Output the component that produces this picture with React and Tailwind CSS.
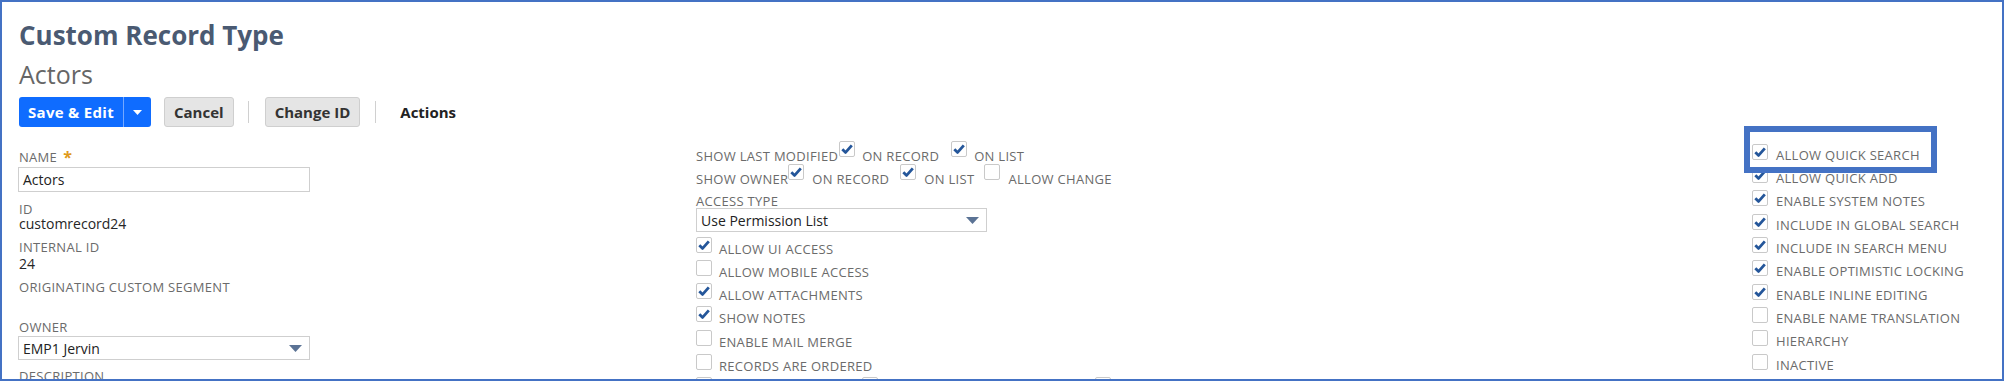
import React from 'react'

// checkbox as drawn by the record form
function Box({ on }) {
  return (
    <span className="w-4 h-4 shrink-0 border border-[#c9c9c9] bg-white rounded-[2px] flex items-center justify-center">
      {on && (
        <svg width="12" height="10" viewBox="0 0 12 10">
          <path d="M1.3 5.2 L4.6 8.4 L10.8 1.4" fill="none" stroke="#24569a" strokeWidth="2.8" strokeLinejoin="round" />
        </svg>
      )}
    </span>
  )
}

function Caret() {
  return (
    <svg width="13" height="7" viewBox="0 0 13 7">
      <path d="M0 0H13L6.5 7Z" fill="#5b7395" />
    </svg>
  )
}

function Select({ value }) {
  return (
    <div className="h-[24px] border border-[#cfcfcf] bg-white flex items-center justify-between pl-[4px] pr-[7px] text-[14px] text-[#222]">
      <span>{value}</span>
      <Caret />
    </div>
  )
}

const lbl = 'text-[13px] tracking-[0.3px] leading-[15px] uppercase text-[#6b6b6b]'

const Label = ({ children, className = '' }) => (
  <div className={lbl + ' ' + className}>{children}</div>
)

const Value = ({ children, className = '' }) => (
  <div className={'text-[14px] leading-[16px] text-[#262626] ' + className}>{children}</div>
)

const midChecks = [
  { label: 'ALLOW UI ACCESS', on: true, h: 'h-[23px]' },
  { label: 'ALLOW MOBILE ACCESS', on: false, h: 'h-[23px]' },
  { label: 'ALLOW ATTACHMENTS', on: true, h: 'h-[23px]' },
  { label: 'SHOW NOTES', on: true, h: 'h-[24px]' },
  { label: 'ENABLE MAIL MERGE', on: false, h: 'h-[24px]' },
  { label: 'RECORDS ARE ORDERED', on: false, h: 'h-[23px]' },
]

// rows are ~23.3px apart, so every third one gets a pixel more
const rightChecks = [
  ['ALLOW QUICK SEARCH', true, 'h-[23px]'],
  ['ALLOW QUICK ADD', true, 'h-[23px]'],
  ['ENABLE SYSTEM NOTES', true, 'h-[24px]'],
  ['INCLUDE IN GLOBAL SEARCH', true, 'h-[23px]'],
  ['INCLUDE IN SEARCH MENU', true, 'h-[23px]'],
  ['ENABLE OPTIMISTIC LOCKING', true, 'h-[24px]'],
  ['ENABLE INLINE EDITING', true, 'h-[23px]'],
  ['ENABLE NAME TRANSLATION', false, 'h-[23px]'],
  ['HIERARCHY', false, 'h-[24px]'],
  ['INACTIVE', false, 'h-[23px]'],
]

export default function App() {
  return (
    <div className="w-[2004px] h-[381px] border-2 border-[#4472c4] bg-white overflow-hidden relative font-['Open_Sans','Liberation_Sans',sans-serif]">
      <div className="pl-[17px] pt-[18px]">
        <div className="text-[26px] leading-[30px] font-bold text-[#4a5a72]">Custom Record Type</div>
        <div className="mt-[10px] text-[25px] leading-[28px] text-[#666]">Actors</div>
        <div className="mt-[9px] flex items-center h-[30px]">
          <div className="flex h-[30px] rounded-[3px] bg-[#0f6cff] text-white">
            <div className="w-[104px] pl-[9px] flex items-center text-[15px] tracking-[0.3px] font-bold">Save &amp; Edit</div>
            <div className="w-px bg-[#74a8ff]" />
            <div className="w-[27px] flex items-center justify-center">
              <svg width="9" height="5" viewBox="0 0 9 5"><path d="M0 0H9L4.5 5Z" fill="#fff" /></svg>
            </div>
          </div>
          <button className="ml-[13px] h-[30px] px-[9px] border border-[#cfcfcf] bg-[#e5e5e5] rounded-[3px] text-[15px] font-bold text-[#333]">Cancel</button>
          <div className="ml-[14px] w-px h-[22px] bg-[#d0d0d0]" />
          <button className="ml-[16px] h-[30px] px-[9px] border border-[#cfcfcf] bg-[#e5e5e5] rounded-[3px] text-[15px] font-bold text-[#333]">Change ID</button>
          <div className="ml-[15px] w-px h-[22px] bg-[#d0d0d0]" />
          <div className="ml-[24px] text-[15px] font-bold text-[#222]">Actions</div>
        </div>
      </div>

      <div className="flex">
        {/* left column */}
        <div className="w-[694px] shrink-0 pl-[16px] pt-[23px]">
          <div className="w-[292px]">
            <Label className="pl-px flex items-start">
              NAME <span className="ml-[6px] text-[#e09a1a] text-[16px] leading-[15px] font-bold">*</span>
            </Label>
            <div className="mt-[2px] h-[25px] border border-[#cfcfcf] flex items-center pl-[4px] text-[14px] text-[#222]">Actors</div>
            <Label className="pl-px mt-[10px]">ID</Label>
            <Value className="pl-px -mt-px">customrecord24</Value>
            <Label className="pl-px mt-[8px]">INTERNAL ID</Label>
            <Value className="pl-px mt-[1px]">24</Value>
            <Label className="pl-px mt-[8px]">ORIGINATING CUSTOM SEGMENT</Label>
            <Label className="pl-px mt-[25px]">OWNER</Label>
            <div className="mt-[1px]">
              <Select value="EMP1 Jervin" />
            </div>
            <Label className="pl-px mt-[9px]">DESCRIPTION</Label>
          </div>
        </div>

        {/* middle column */}
        <div className="w-[1056px] shrink-0 pt-[14px]">
          <div className={'flex items-end h-[23px] ' + lbl}>
            <span>SHOW LAST MODIFIED</span>
            <span className="mb-[7px] ml-px"><Box on /></span>
            <span className="ml-[7px]">ON RECORD</span>
            <span className="mb-[7px] ml-[12px]"><Box on /></span>
            <span className="ml-[7px]">ON LIST</span>
          </div>
          <div className={'flex items-end h-[23px] ' + lbl}>
            <span>SHOW OWNER</span>
            <span className="mb-[7px]"><Box on /></span>
            <span className="ml-[8px]">ON RECORD</span>
            <span className="mb-[7px] ml-[11px]"><Box on /></span>
            <span className="ml-[8px]">ON LIST</span>
            <span className="mb-[7px] ml-[10px]"><Box /></span>
            <span className="ml-[8px]">ALLOW CHANGE</span>
          </div>
          <div className="mt-[7px] text-[13px] tracking-[0.3px] leading-[14px] text-[#6b6b6b]">ACCESS TYPE</div>
          <div className="w-[291px]">
            <Select value="Use Permission List" />
          </div>
          <div className="mt-[5px]">
            {midChecks.map((c) => (
              <div key={c.label} className={'flex items-start gap-[7px] ' + c.h}>
                <Box on={c.on} />
                <span className={'mt-[5px] ' + lbl}>{c.label}</span>
              </div>
            ))}
            <div className="flex items-start h-[23px]">
              <Box />
              <span className="ml-[150px]"><Box /></span>
              <span className="ml-[217px]"><Box /></span>
            </div>
          </div>
        </div>

        {/* right column */}
        <div className="flex-1 pt-[17px]">
          {rightChecks.map(([label, on, h]) => (
            <div key={label} className={'flex items-start gap-[8px] ' + h}>
              <Box on={on} />
              <span className={'mt-[4px] ' + lbl}>{label}</span>
            </div>
          ))}
        </div>
      </div>

      {/* highlight drawn over the quick search option */}
      <div className="absolute left-[1742px] top-[124px] w-[193px] h-[47px] border-[6px] border-[#4472c4]" />
    </div>
  )
}
